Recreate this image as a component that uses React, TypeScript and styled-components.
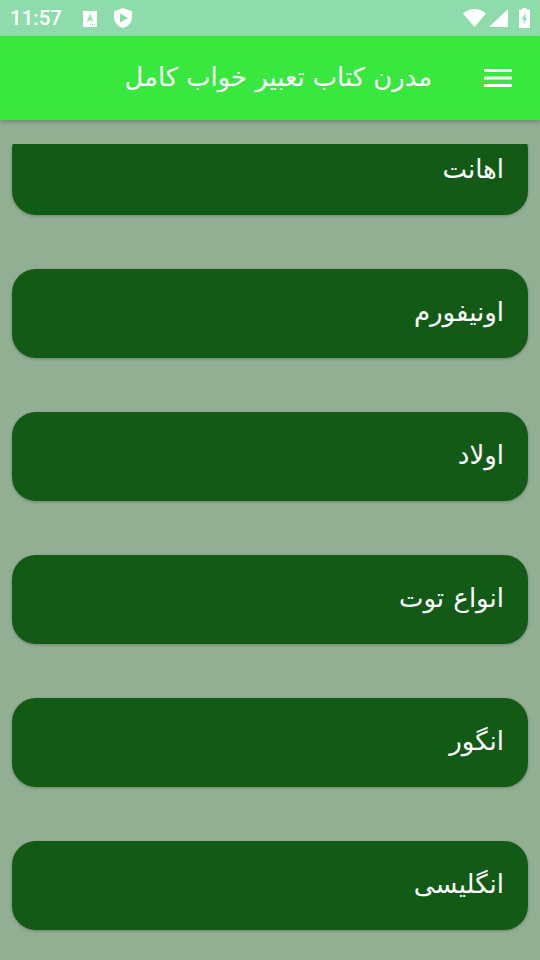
import React from "react";
import styled, { createGlobalStyle } from "styled-components";

const Global = createGlobalStyle`
  html, body { margin: 0; padding: 0; width: 540px; height: 960px; overflow: hidden; }
  body { font-family: "DejaVu Sans", sans-serif; background: #92ae93; }
`;
const Page = styled.div`
  width: 540px; height: 960px; display: flex; flex-direction: column; background: #92ae93; overflow: hidden;
`;
const StatusBar = styled.div`
  height: 36px; flex: none; background: #8edcac; display: flex; align-items: center; justify-content: space-between;
  padding: 0 10px 0 10px; color: #fff;
`;
const StatusGroup = styled.div`display: flex; align-items: center;`;
const Clock = styled.span`
  font-family: Roboto, sans-serif; font-size: 20.5px; font-weight: 500; margin-right: 20px; line-height: 36px;
`;
const AppBar = styled.header`
  height: 84px; flex: none; background: #38e83f; display: flex; align-items: center; justify-content: flex-end;
  box-shadow: 0 2px 4px rgba(0,0,0,.22); position: relative; z-index: 1; padding-right: 28px; gap: 52px;
`;
const Title = styled.h1`
  margin: 0 0 3px; font-size: 25.8px; font-weight: 400; color: #fff; direction: rtl; font-family: "DejaVu Sans", sans-serif;
`;
const Viewport = styled.main`
  margin-top: 24px; flex: 1; overflow: hidden;
`;
const List = styled.div`
  margin-top: -18px; padding: 0 12px; display: flex; flex-direction: column; gap: 54px;
`;
const Card = styled.div`
  height: 89px; box-sizing: border-box; border-radius: 24px; background: #145a17; color: #fff; direction: rtl;
  padding: 25px 24px 0; font-size: 26px; line-height: 36px; word-spacing: 1px; font-family: "DejaVu Sans", sans-serif;
  box-shadow: 0 1px 3px rgba(0,0,0,.25);
`;
const items = ["اهانت", "اونیفورم", "اولاد", "انواع توت", "انگور", "انگلیسی"];

export default function App() {
  return (
    <Page>
      <Global />
      <StatusBar>
        <StatusGroup>
          <Clock>11:57</Clock>
          <svg width="16" height="16" viewBox="0 0 16 16" style={{ marginRight: 16, marginTop: 1 }}>
            <path fill="#fff" d="M1 0h14v16H1z" />
            <path fill="#8edcac" d="M8 2.500l3 8H9.600L9 8.900H7L6.400 10.500H5zM7.500 7.500h1L8 5.900zM8 13h1v1H8zM10 13h1v1h-1zM12 13h1v1h-1z" />
          </svg>
          <svg width="18" height="20" viewBox="0 0 18 20">
            <path fill="#fff" d="M9 0l9 3.200v6c0 5-3.600 9-9 10.800C3.600 18.200 0 14.200 0 9.200v-6z" />
            <path fill="#8edcac" d="M6 5.500l8 4.500-8 4.500z" />
          </svg>
        </StatusGroup>
        <StatusGroup>
          <svg width="24" height="18" viewBox="0 0 24 18" style={{ marginRight: 2, marginTop: -1 }}>
            <path fill="#fff" d="M0 4.500C3 1.800 7 0 11.500 0S20 1.800 23 4.500L11.500 18z" />
          </svg>
          <svg width="19" height="18" viewBox="0 0 19 18" style={{ marginRight: 11 }}>
            <path fill="#fff" d="M19 0v18H0z" />
          </svg>
          <svg width="11" height="20" viewBox="0 0 11 20">
            <path fill="#fff" d="M3.500 0h4v1.500H11V20H0V1.500h3.500z" />
            <path fill="#8edcac" d="M6.800 4L2.800 11.500h2.400L4.200 17l4-7.500H5.800z" />
          </svg>
        </StatusGroup>
      </StatusBar>
      <AppBar>
        <Title>مدرن کتاب تعبیر خواب کامل</Title>
        <svg width="28" height="20" viewBox="0 0 28 20">
          <path fill="#fff" d="M0 1h28v3H0zM0 8.500h28v3H0zM0 16h28v3H0z" />
        </svg>
      </AppBar>
      <Viewport>
        <List>
          {items.map((t) => (
            <Card key={t}>{t}</Card>
          ))}
        </List>
      </Viewport>
    </Page>
  );
}
